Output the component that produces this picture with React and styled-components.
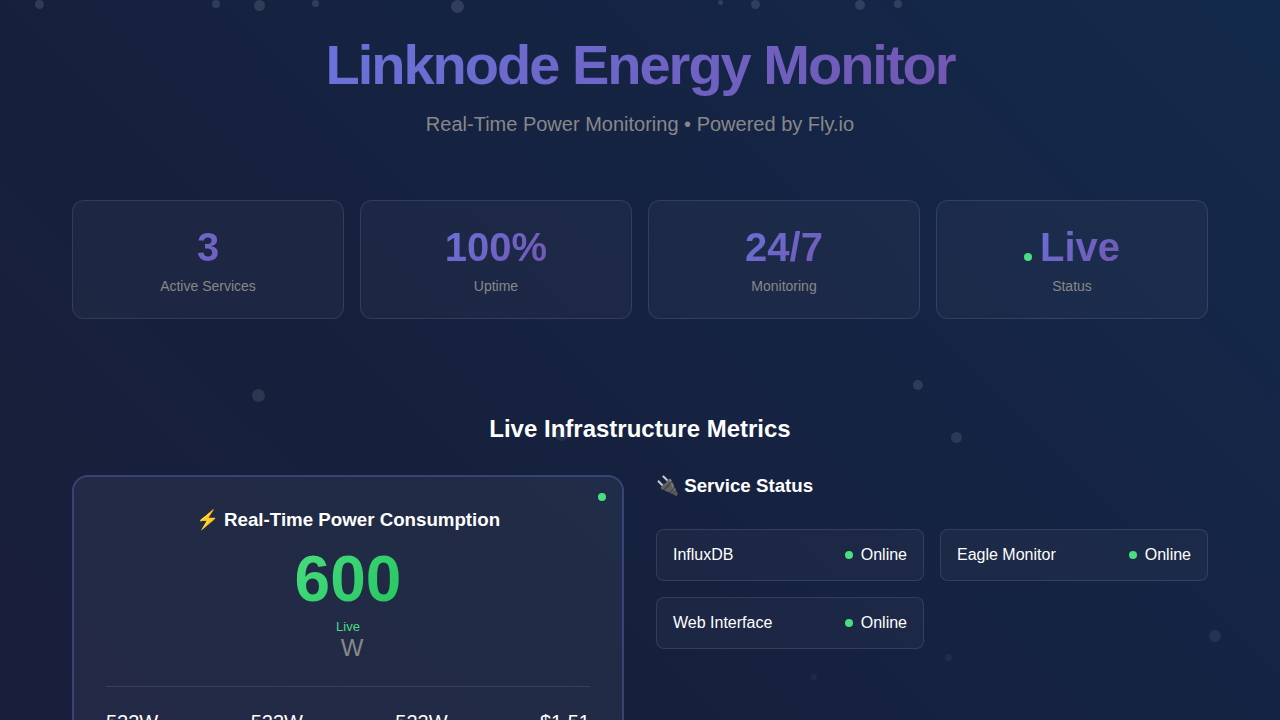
import React from "react";
import styled, { createGlobalStyle, css } from "styled-components";

const GlobalStyle = createGlobalStyle`
  * { box-sizing: border-box; margin: 0; padding: 0; }
  body {
    font-family: "Liberation Sans", Arial, sans-serif;
    color: #fff;
    background: linear-gradient(45deg, #191e3a 0%, #16203d 35%, #152444 68%, #13294b 100%);
    min-height: 100vh;
    overflow-x: hidden;
  }
`;

const brandText = css`
  background: linear-gradient(135deg, #667eea 0%, #764ba2 100%);
  background-clip: text;
  -webkit-background-clip: text;
  color: transparent;
`;

const Page = styled.div`
  position: relative;
  min-height: 100vh;
`;

const Particles = styled.div`
  position: absolute;
  inset: 0;
  overflow: hidden;
  pointer-events: none;
`;

const Particle = styled.span`
  position: absolute;
  left: ${(p) => p.$x}px;
  top: ${(p) => p.$y}px;
  width: ${(p) => p.$size}px;
  height: ${(p) => p.$size}px;
  border-radius: 50%;
  background: #fff;
  opacity: ${(p) => p.$alpha};
`;

const Container = styled.main`
  position: relative;
  max-width: 1200px;
  margin: 0 auto;
  padding: 32px;
`;

const Header = styled.header`
  text-align: center;
  margin-bottom: 64px;
`;

const Title = styled.h1`
  ${brandText}
  font-size: 56px;
  line-height: 66px;
  letter-spacing: -2px;
  margin-bottom: 14px;
`;

const Subtitle = styled.p`
  color: #888;
  font-size: 20px;
  line-height: 24px;
`;

const Stats = styled.section`
  display: grid;
  grid-template-columns: repeat(4, 1fr);
  gap: 16px;
  margin-bottom: 96px;
`;

const StatCard = styled.div`
  display: flex;
  flex-direction: column;
  gap: 10px;
  padding: 24px;
  border: 1px solid rgba(255, 255, 255, 0.1);
  border-radius: 12px;
  background: rgba(255, 255, 255, 0.03);
  text-align: center;
`;

const StatValue = styled.div`
  ${brandText}
  font-size: 40px;
  font-weight: 700;
  line-height: 44px;
`;

const StatLabel = styled.div`
  color: #888;
  font-size: 14px;
  line-height: 15px;
`;

const Dot = styled.span`
  display: inline-block;
  width: 8px;
  height: 8px;
  border-radius: 50%;
  background: #4ade80;
`;

const InlineDot = styled(Dot)`
  margin-right: 8px;
`;

const CornerDot = styled(Dot)`
  position: absolute;
  top: 16px;
  right: 16px;
`;

const SectionTitle = styled.h2`
  text-align: center;
  font-size: 24px;
  line-height: 28px;
  margin-bottom: 32px;
`;

const Columns = styled.div`
  display: grid;
  grid-template-columns: 1fr 1fr;
  gap: 32px;
`;

const PowerCard = styled.section`
  position: relative;
  padding: 32px;
  border: 2px solid rgba(102, 126, 234, 0.3);
  border-radius: 16px;
  background: rgba(255, 255, 255, 0.05);
  text-align: center;
`;

const SubHeading = styled.h3`
  line-height: 22px;
`;

const Reading = styled.div`
  font-size: 64px;
  font-weight: 700;
  line-height: 72px;
  margin: 12px auto 4px;
  width: max-content;
  background: linear-gradient(135deg, #4ade80 0%, #22c55e 100%);
  background-clip: text;
  -webkit-background-clip: text;
  color: transparent;
`;

const ReadingState = styled.div`
  color: #4ade80;
  font-size: 13px;
  line-height: 15px;
`;

const Unit = styled.div`
  color: #888;
  font-size: 24px;
  line-height: 28px;
  padding-left: 8px;
`;

const Totals = styled.div`
  display: flex;
  justify-content: space-between;
  margin-top: 24px;
  padding-top: 24px;
  border-top: 1px solid rgba(255, 255, 255, 0.1);
  font-size: 20px;
  line-height: 23px;
`;

const Services = styled.section`
  display: flex;
  flex-direction: column;
  gap: 32px;
`;

const ServiceGrid = styled.ul`
  display: grid;
  grid-template-columns: 1fr 1fr;
  gap: 16px;
  list-style: none;
`;

const Service = styled.li`
  display: flex;
  justify-content: space-between;
  align-items: center;
  padding: 16px;
  border: 1px solid rgba(255, 255, 255, 0.1);
  border-radius: 8px;
  background: rgba(255, 255, 255, 0.03);
  font-size: 16px;
  line-height: 18px;
`;

const ServiceState = styled.span`
  display: flex;
  align-items: center;
  gap: 8px;
`;

const particles = [
  [35, 0, 9, 0.12], [212, 0, 8, 0.12], [254, 0, 11, 0.12], [312, 0, 7, 0.12],
  [451, 0, 13, 0.12], [718, 0, 5, 0.12], [751, 0, 9, 0.12], [855, 0, 10, 0.12],
  [894, 0, 8, 0.12], [252, 389, 13, 0.1], [913, 380, 10, 0.11], [951, 432, 11, 0.1],
  [555, 428, 13, 0.08], [1209, 630, 12, 0.07], [945, 654, 7, 0.05], [811, 674, 6, 0.04],
];

const stats = [
  ["3", "Active Services"],
  ["100%", "Uptime"],
  ["24/7", "Monitoring"],
  ["Live", "Status", true],
];

const services = ["InfluxDB", "Eagle Monitor", "Web Interface"];
const totals = ["523W", "523W", "523W", "$1.51"];

export default function App() {
  return (
    <Page>
      <GlobalStyle />
      <Particles aria-hidden="true">
        {particles.map(([x, y, size, alpha]) => (
          <Particle key={`${x}-${y}`} $x={x} $y={y} $size={size} $alpha={alpha} />
        ))}
      </Particles>
      <Container>
        <Header>
          <Title>Linknode Energy Monitor</Title>
          <Subtitle>Real-Time Power Monitoring • Powered by Fly.io</Subtitle>
        </Header>
        <Stats>
          {stats.map(([value, label, live]) => (
            <StatCard key={label}>
              <StatValue>
                {live && <InlineDot />}
                {value}
              </StatValue>
              <StatLabel>{label}</StatLabel>
            </StatCard>
          ))}
        </Stats>
        <SectionTitle>Live Infrastructure Metrics</SectionTitle>
        <Columns>
          <PowerCard>
            <CornerDot />
            <SubHeading>⚡ Real-Time Power Consumption</SubHeading>
            <Reading>600</Reading>
            <ReadingState>Live</ReadingState>
            <Unit>W</Unit>
            <Totals>
              {totals.map((total, i) => (
                <span key={i}>{total}</span>
              ))}
            </Totals>
          </PowerCard>
          <Services>
            <SubHeading>🔌 Service Status</SubHeading>
            <ServiceGrid>
              {services.map((name) => (
                <Service key={name}>
                  <span>{name}</span>
                  <ServiceState>
                    <Dot />
                    Online
                  </ServiceState>
                </Service>
              ))}
            </ServiceGrid>
          </Services>
        </Columns>
      </Container>
    </Page>
  );
}
